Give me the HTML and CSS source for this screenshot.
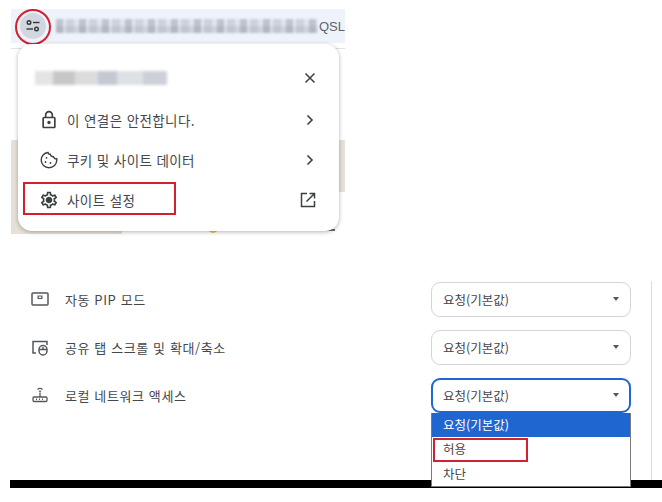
FILE: index.html
```html
<!DOCTYPE html>
<html lang="ko">

<head>
    <meta charset="UTF-8">
    <meta name="viewport" content="width=device-width, initial-scale=1.0">
    <title>사이트 설정</title>
    <link rel="stylesheet" href="styles.css">
</head>

<body>
    <div class="browser">
        <div class="address-bar">
            <span class="tune-btn">
                <svg width="16" height="16" viewBox="0 0 16 16" fill="none" stroke="#33373c" stroke-width="1.4">
                    <circle cx="4" cy="4.5" r="1.8"/>
                    <path d="M8 4.5h6.5"/>
                    <circle cx="11.5" cy="11" r="1.8"/>
                    <path d="M1.5 11H8"/>
                </svg>
            </span>
            <span class="blur-url"></span>
            <span class="url-end">QSL</span>
        </div>
        <div class="bar-line"></div>
        <div class="page-image"></div>
        <div class="page-image-low">
            <span class="page-frag"></span>
            <span class="page-text"></span>
        </div>

        <div class="ring"></div>

        <div class="popup">
            <div class="popup-head">
                <span class="blur-title"></span>
                <svg class="row-end" width="12" height="12" viewBox="0 0 12 12" fill="none" stroke="#3c4043" stroke-width="1.5">
                    <path d="M1.5 1.5l9 9M10.5 1.5l-9 9"/>
                </svg>
            </div>
            <div class="popup-row">
                <svg class="row-icon" width="20" height="20" viewBox="0 0 24 24" fill="#3c4043">
                    <path d="M18 8h-1V6c0-2.76-2.24-5-5-5S7 3.24 7 6v2H6c-1.1 0-2 .9-2 2v10c0 1.1.9 2 2 2h12c1.1 0 2-.9 2-2V10c0-1.1-.9-2-2-2zM9 6c0-1.66 1.34-3 3-3s3 1.34 3 3v2H9V6zm9 14H6V10h12v10zm-6-3c1.1 0 2-.9 2-2s-.9-2-2-2-2 .9-2 2 .9 2 2 2z"/>
                </svg>
                <span class="row-text">이 연결은 안전합니다.</span>
                <svg class="row-end" width="12" height="12" viewBox="0 0 12 12" fill="none" stroke="#3c4043" stroke-width="1.6">
                    <path d="M3.5 1.5L8 6l-4.500 4.500"/>
                </svg>
            </div>
            <div class="popup-row">
                <svg class="row-icon" width="20" height="20" viewBox="0 0 20 20" fill="none" stroke="#3c4043" stroke-width="1.4">
                    <path d="M9 2.500c-4 .4-6.800 3.600-6.800 7.500a7.800 7.800 0 0 0 15.600 0c0-.5 0-.9-.1-1.300-1.600.4-2.900-.5-3.200-2-1.700.2-3-.9-3.100-2.400C10 4.500 9.200 3.600 9 2.500z"/>
                    <circle cx="7.500" cy="7.800" r=".9" fill="#3c4043" stroke="none"/>
                    <circle cx="6.500" cy="12" r=".9" fill="#3c4043" stroke="none"/>
                    <circle cx="11.500" cy="13" r=".9" fill="#3c4043" stroke="none"/>
                </svg>
                <span class="row-text">쿠키 및 사이트 데이터</span>
                <svg class="row-end" width="12" height="12" viewBox="0 0 12 12" fill="none" stroke="#3c4043" stroke-width="1.6">
                    <path d="M3.5 1.5L8 6l-4.500 4.500"/>
                </svg>
            </div>
            <div class="popup-row">
                <svg class="row-icon" width="20" height="20" viewBox="0 0 24 24" fill="#3c4043">
                    <path d="M19.430 12.980c.04-.32.07-.64.07-.98s-.03-.66-.07-.98l2.110-1.650c.19-.15.24-.42.12-.64l-2-3.460c-.12-.22-.39-.3-.61-.22l-2.490 1c-.52-.4-1.080-.73-1.690-.98l-.38-2.650C14.460 2.180 14.250 2 14 2h-4c-.25 0-.46.18-.49.42l-.38 2.650c-.61.25-1.170.59-1.690.98l-2.490-1c-.23-.09-.49 0-.61.22l-2 3.460c-.13.22-.07.49.12.64l2.110 1.650c-.04.32-.07.65-.07.98s.03.66.07.98l-2.110 1.650c-.19.15-.24.42-.12.64l2 3.460c.12.22.39.3.61.22l2.490-1c.52.4 1.080.73 1.690.98l.38 2.650c.03.24.24.42.49.42h4c.25 0 .46-.18.49-.42l.38-2.650c.61-.25 1.170-.59 1.690-.98l2.490 1c.23.09.49 0 .61-.22l2-3.460c.12-.22.07-.49-.12-.64l-2.110-1.650zM17.450 11.270c.04.31.05.52.05.73 0 .21-.02.43-.05.73l-.14 1.130.89.7 1.080.84-.7 1.210-1.270-.51-1.040-.42-.9.68c-.43.32-.84.56-1.250.73l-1.060.43-.16 1.130-.2 1.350h-1.400l-.19-1.350-.16-1.130-1.060-.43c-.43-.18-.83-.41-1.230-.71l-.91-.7-1.060.43-1.270.51-.7-1.210 1.080-.84.89-.7-.14-1.130c-.03-.31-.05-.54-.05-.74s.02-.43.05-.73l.14-1.130-.89-.7-1.080-.84.7-1.210 1.270.51 1.040.42.9-.68c.43-.32.84-.56 1.250-.73l1.060-.43.16-1.130.2-1.350h1.390l.19 1.350.16 1.130 1.060.43c.43.18.83.41 1.230.71l.91.7 1.060-.43 1.270-.51.7 1.210-1.070.85-.89.7.14 1.130zM12 8c-2.210 0-4 1.790-4 4s1.790 4 4 4 4-1.790 4-4-1.790-4-4-4z"/>
                </svg>
                <span class="row-text">사이트 설정</span>
                <svg class="row-end" width="16" height="16" viewBox="0 0 16 16" fill="none" stroke="#3c4043" stroke-width="1.500">
                    <path d="M7 1.500H1.500v13h13V9"/>
                    <path d="M6.500 9.500l7.500-7.500M9.500 1.500h5v5"/>
                </svg>
            </div>
            <div class="mark mark-settings"></div>
        </div>
    </div>

    <div class="settings">
        <div class="setting">
            <svg class="setting-icon" width="18" height="18" viewBox="0 0 18 18" fill="none" stroke="#54585d" stroke-width="1.500">
                <rect x="1" y="3" width="16" height="12" rx="1"/>
                <rect x="6.500" y="5.500" width="5" height="3.500" fill="#54585d" stroke="none"/>
                <rect x="7.700" y="6.500" width="2.600" height="1.400" fill="#fff" stroke="none"/>
            </svg>
            <span class="setting-label">자동 PIP 모드</span>
            <div class="select"><span>요청(기본값)</span><i class="caret"></i></div>
        </div>
        <div class="setting">
            <svg class="setting-icon" width="18" height="18" viewBox="0 0 18 18" fill="none" stroke="#54585d" stroke-width="1.500">
                <path d="M5 15H2V3.500h14V7"/>
                <rect x="8" y="7.500" width="8" height="9.500" rx="4"/>
                <path d="M8 11.500h8M12 9v2.500"/>
            </svg>
            <span class="setting-label">공유 탭 스크롤 및 확대/축소</span>
            <div class="select"><span>요청(기본값)</span><i class="caret"></i></div>
        </div>
        <div class="setting">
            <svg class="setting-icon" width="18" height="18" viewBox="0 0 18 18" fill="none" stroke="#54585d" stroke-width="1.300">
                <path d="M6.500 3.500c1.500-1.300 3.500-1.300 5 0M8 5.500c.6-.5 1.400-.5 2 0"/>
                <path d="M9 6.500V11"/>
                <rect x="2" y="11" width="14" height="4.500" rx="1"/>
                <path d="M5 13.300h1M8 13.300h1M11 13.300h1" stroke-width="1.400"/>
            </svg>
            <span class="setting-label">로컬 네트워크 액세스</span>
            <div class="select-wrap">
                <div class="select select-open"><span>요청(기본값)</span><i class="caret"></i></div>
                <ul class="options">
                    <li class="option-on">요청(기본값)</li>
                    <li>허용</li>
                    <li>차단</li>
                    <li class="mark mark-allow"></li>
                </ul>
            </div>
        </div>
        <div class="scroll-line"></div>
    </div>

    <div class="bottom-strip"></div>
</body>

</html>
```
FILE: styles.css
```css
body {
    font-family: "Noto Sans CJK KR", "Noto Sans", sans-serif;
    background-color: #ffffff;
    color: #44474b;
    margin: 0;
    height: 502px;
    overflow: hidden;
}

.browser {
    position: relative;
    height: 275px;
    padding-top: 9px;
    box-sizing: border-box;
}

.address-bar {
    display: flex;
    align-items: center;
    width: 334px;
    height: 34px;
    margin-left: 11px;
    padding-left: 9px;
    box-sizing: border-box;
    background-color: #eef2fb;
}

.tune-btn {
    display: flex;
    align-items: center;
    justify-content: center;
    width: 26px;
    height: 26px;
    border-radius: 50%;
    background-color: #d2d6de;
    flex: none;
}

.blur-url {
    width: 262px;
    height: 14px;
    margin-left: 10px;
    filter: blur(1.2px);
    background:
        repeating-linear-gradient(90deg, rgba(160, 165, 178, 0.5) 0 7px, rgba(238, 242, 251, 0.4) 7px 10px, rgba(190, 195, 205, 0.5) 10px 18px, rgba(238, 242, 251, 0.2) 18px 23px),
        linear-gradient(#dde1ea 0 50%, #c6cad4 50% 100%);
}

.url-end {
    font-family: "Liberation Sans", sans-serif;
    font-size: 13px;
    color: #5f6368;
    margin-left: 1px;
}

.bar-line {
    width: 334px;
    height: 1px;
    margin: 5px 0 0 11px;
    background-color: #dfe1e5;
}

.page-image {
    width: 334px;
    height: 52px;
    margin: 91px 0 0 11px;
    background-color: #e6e1d8;
}

.page-image-low {
    position: relative;
    width: 111px;
    height: 42px;
    margin-left: 11px;
    background-color: #e6e1d8;
}

.page-frag {
    position: absolute;
    left: 197px;
    top: 35px;
    width: 10px;
    height: 6px;
    border-radius: 0 0 6px 6px;
    background-color: #edc33f;
}

.page-text {
    position: absolute;
    left: 251px;
    top: 37px;
    width: 73px;
    height: 2px;
    background: repeating-linear-gradient(90deg, #6b6b6b 0 9px, transparent 9px 16px);
}

.ring {
    position: absolute;
    left: 15px;
    top: 9px;
    width: 36px;
    height: 36px;
    box-sizing: border-box;
    border: 2px solid #d3202f;
    border-radius: 50%;
}

.popup {
    position: absolute;
    left: 18px;
    top: 44px;
    width: 321px;
    height: 187px;
    box-sizing: border-box;
    padding: 14px 21px 0 21px;
    background-color: #ffffff;
    border-radius: 14px;
    box-shadow: 0 1px 4px rgba(0, 0, 0, 0.3);
}

.popup-head {
    display: flex;
    align-items: center;
    justify-content: space-between;
    height: 40px;
    margin-bottom: 2px;
}

.blur-title {
    width: 132px;
    height: 14px;
    margin-left: -4px;
    filter: blur(1.5px);
    background: linear-gradient(90deg, #e3e4e6 0 14%, #c9c7c6 14% 30%, #dcdcdf 30% 48%, #c4c8d2 48% 62%, #dde1e6 62% 82%, #cdd0d6 82% 100%);
}

.popup-row {
    display: flex;
    align-items: center;
    height: 40px;
}

.row-icon {
    flex: none;
    margin-right: 8px;
}

.row-text {
    flex: 1;
    font-size: 13.5px;
    letter-spacing: 0.4px;
}

.row-end {
    flex: none;
    margin-right: 2px;
}

.mark {
    position: absolute;
    box-sizing: border-box;
    border: 2px solid #d3202f;
    list-style: none;
}

.mark-settings {
    left: 5px;
    top: 138px;
    width: 153px;
    height: 33px;
}

.settings {
    position: relative;
    display: flex;
    flex-direction: column;
    width: 600px;
    margin-left: 31px;
}

.setting {
    display: flex;
    align-items: center;
    height: 48px;
}

.setting-icon {
    flex: none;
    margin-right: 16px;
}

.setting-label {
    flex: 1;
    font-size: 13px;
    letter-spacing: 0.6px;
}

.select-wrap {
    position: relative;
}

.select {
    display: flex;
    align-items: center;
    justify-content: space-between;
    width: 200px;
    height: 35px;
    box-sizing: border-box;
    padding: 0 11px;
    border: 1px solid #d3d5d9;
    border-radius: 9px;
    font-size: 12.5px;
}

.select-open {
    border: 2px solid #1f66d0;
    padding: 0 10px;
}

.caret {
    width: 0;
    height: 0;
    border-left: 3.5px solid transparent;
    border-right: 3.5px solid transparent;
    border-top: 4px solid #55585c;
}

.options {
    position: absolute;
    left: 0;
    top: 35px;
    width: 200px;
    height: 74px;
    box-sizing: border-box;
    margin: 0;
    padding: 0;
    list-style: none;
    background-color: #ffffff;
    border: 1px solid #7a7a7a;
    border-top: none;
    font-size: 12.5px;
    z-index: 2;
}

.options li {
    height: 24.500px;
    line-height: 24px;
    padding-left: 11px;
}

.options .option-on {
    background-color: #1f66d0;
    color: #ffffff;
}

.options .mark-allow {
    left: 1px;
    top: 25px;
    width: 95px;
    height: 24px;
    padding: 0;
}

.scroll-line {
    position: absolute;
    left: 620px;
    top: 6px;
    width: 1px;
    height: 199px;
    background-color: #dcdcdc;
}

.bottom-strip {
    height: 8px;
    margin: 61px 0 0 10px;
    background-color: #000000;
}
```
